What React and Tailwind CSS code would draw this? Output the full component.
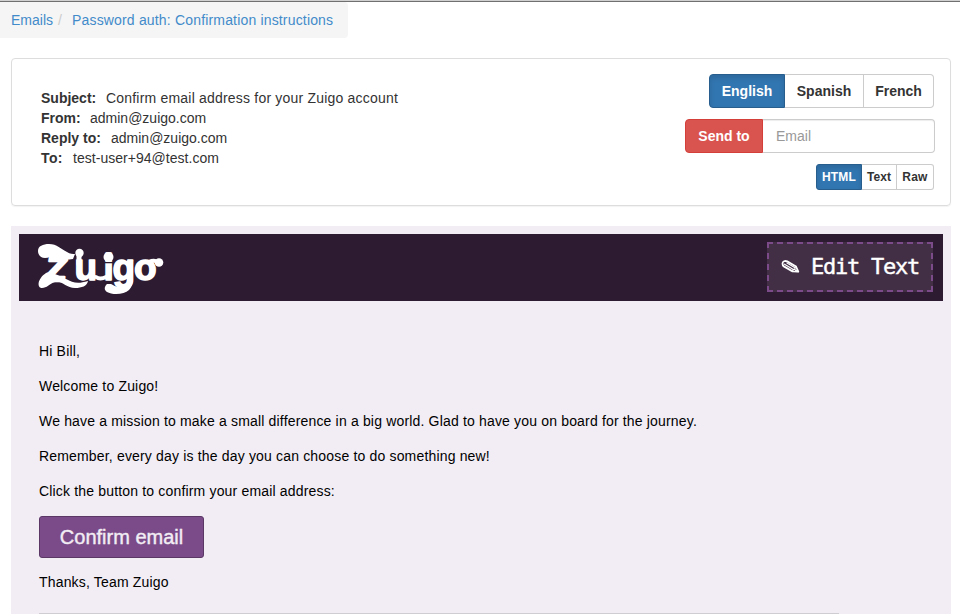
const details = [
  { label: 'Subject:', value: 'Confirm email address for your Zuigo account', lw: 'w-[65px]', ls: 'tracking-[0.2px]' },
  { label: 'From:', value: 'admin@zuigo.com', lw: 'w-[49px]', ls: 'tracking-[0px]' },
  { label: 'Reply to:', value: 'admin@zuigo.com', lw: 'w-[70px]', ls: 'tracking-[0px]' },
  { label: 'To:', value: 'test-user+94@test.com', lw: 'w-[32px] tracking-[0.4px]', ls: 'tracking-[0.03px]' },
];

const paragraphs = [
  'Hi Bill,',
  'Welcome to Zuigo!',
  'We have a mission to make a small difference in a big world. Glad to have you on board for the journey.',
  'Remember, every day is the day you can choose to do something new!',
  'Click the button to confirm your email address:',
];

function Logo() {
  return (
    <svg className="block h-[53px] w-[128px]" viewBox="0 0 128 53" role="img" aria-label="Zuigo">
      <g fill="#fff" stroke="#fff" strokeLinejoin="round" fontFamily="'Liberation Sans', Arial, sans-serif" fontWeight="700">
        <text y="38.500" x="8" fontSize="35" strokeWidth="2.500" fontStyle="italic">Z</text>
        <text y="37.500" x="37.5 66.5 75.5 97" fontSize="37" strokeWidth="1.500">uigo</text>
      </g>
      <g fill="#fff">
        <path d="M1 9C1 4 6 2 12 2c8 0 12 5 18 8 3 2 6 2 8 2l-2 5c-8 2-13-3-19-3-3 0-5 2-9 2-4 0-7-3-7-7Z" />
        <path d="M9 31C14 29 22 34 29 37c7 4 12 5 22 2-1 5-6 7-13 7-9 0-13-8-20-6-6 2-8 6-13 6C0 46 0 37 9 31Z" />
        <path d="M70 42c-3 3-3 6 0 8 5 3 17 3 22-2 3-3 4-7 4-11l-6 1c0 5-2 7-7 7-5 0-6-2-9-3Z" />
        <circle cx="42.500" cy="11" r="4.200" />
        <circle cx="71.500" cy="15" r="5" />
        <circle cx="122" cy="20.500" r="4.300" />
      </g>
      <path d="M71.500 20.600h-5M71.500 20.600h5" stroke="#2d1b32" strokeWidth="1.200" />
      <g fill="none" stroke="#fff" strokeLinecap="round">
        <path d="M42 12v10" strokeWidth="5" />
        <path d="M59 35Q63 38 69 35" strokeWidth="4" />
        <path d="M112 20Q117 17.500 121 20" strokeWidth="4" />
      </g>
    </svg>
  );
}

function Pencil() {
  return (
    <svg className="mr-[11px] h-[16px] w-[19px]" viewBox="0 0 19 16" fill="none" stroke="#fff" strokeLinejoin="round" strokeLinecap="round">
      <path d="M1.500 4.500C1.500 2.300 4 1.500 6.200 2.400L15 7.500 17.300 12.700 11.500 12.400 2.800 7.400C1.800 6.700 1.500 5.600 1.500 4.500Z" strokeWidth="1.800" />
      <path d="M3.500 5.200 11.500 10M6 4 14 8.800M11.500 12.400 12.300 10.300 14 10.300 14 8.500 15 7.500" strokeWidth="1.200" />
      <path d="M15 11 17.300 12.700 14.500 12.500Z" fill="#fff" />
    </svg>
  );
}

export default function App() {
  return (
    <div className="flex h-[614px] w-[960px] flex-col overflow-hidden bg-white font-['Liberation_Sans',Arial,sans-serif] text-[14px] leading-5 text-[#333]">
      <div className="h-[2px] shrink-0 border-t border-b border-t-[#d0d0d0] border-b-[#707070]" />
      <nav className="flex h-[36px] w-[348px] shrink-0 items-center rounded-r-[4px] bg-[#f5f5f5] pl-[11px] text-[#428bca]">
        <a className="w-[47px]">Emails</a>
        <span className="w-[14px] text-[#ccc]">/</span>
        <a className="tracking-[0.17px] whitespace-nowrap">Password auth: Confirmation instructions</a>
      </nav>

      <section className="mt-[20px] ml-[11px] flex h-[148px] w-[940px] shrink-0 justify-between rounded-[4px] border border-[#ddd] pl-[29px] shadow-[0_1px_1px_rgba(0,0,0,0.05)]">
        <dl className="pt-[29px]">
          {details.map((d) => (
            <div key={d.label} className="flex h-5 whitespace-nowrap">
              <dt className={`${d.lw} font-bold`}>{d.label}</dt>
              <dd className={d.ls}>{d.value}</dd>
            </div>
          ))}
        </dl>
        <div className="flex flex-col items-end pt-[15px] pr-[15px]">
          <div className="mr-px flex h-[34px] font-bold">
            <button className="w-[76px] rounded-l-[4px] border border-[#285e8e] bg-[#3276b1] text-white shadow-[inset_0_3px_5px_rgba(0,0,0,0.125)]">English</button>
            <button className="w-[79px] border-y border-r border-[#ccc]">Spanish</button>
            <button className="w-[70px] rounded-r-[4px] border-y border-r border-[#ccc]">French</button>
          </div>
          <div className="mt-[11px] flex h-[34px]">
            <button className="w-[78px] rounded-l-[4px] border border-[#d43f3a] bg-[#d9534f] font-bold text-white">Send to</button>
            <input placeholder="Email" className="w-[172px] rounded-r-[4px] border-y border-r border-[#ccc] pl-[13px] shadow-[inset_0_1px_1px_rgba(0,0,0,0.075)] placeholder:text-[#999]" />
          </div>
          <div className="mt-[11px] mr-px flex h-[26px] text-[12px] font-bold">
            <button className="w-[46px] rounded-l-[3px] border border-[#285e8e] bg-[#3276b1] tracking-[0.2px] text-white shadow-[inset_0_3px_5px_rgba(0,0,0,0.125)]">HTML</button>
            <button className="w-[35px] border-y border-r border-[#ccc]">Text</button>
            <button className="w-[37px] rounded-r-[3px] border-y border-r border-[#ccc] tracking-[0.2px]">Raw</button>
          </div>
        </div>
      </section>

      <main className="mt-[20px] ml-[11px] w-[940px] grow bg-[#f2edf4] px-[8px] pt-[8px] text-black">
        <header className="flex h-[67px] items-start justify-between bg-[#2d1b32] pt-[8px] pr-[10px] pl-[18px]">
          <Logo />
          <button className="flex h-[50px] w-[166px] items-center border-2 border-dashed border-[#7b4b89] bg-[#422f46] pl-[12px] font-['DejaVu_Sans_Mono',monospace] text-[22px] tracking-[-1.24px] whitespace-pre text-white [-webkit-text-stroke:0.4px_#fff]">
            <Pencil />
            Edit Text
          </button>
        </header>
        <article className="px-[20px] pt-[40px] tracking-[0.17px]">
          {paragraphs.map((p) => (
            <p key={p} className="mb-[15px] whitespace-nowrap">{p}</p>
          ))}
          <button className="block h-[42px] w-[165px] rounded-[3px] border border-[#5b3766] bg-[#7b4b89] text-[20px] tracking-[0px] text-[#f2edf4] [-webkit-text-stroke:0.4px_#f2edf4]">Confirm email</button>
          <p className="mt-[14px]">Thanks, Team Zuigo</p>
          <hr className="mt-[21px] w-[800px] border-[#d0cdd2]" />
        </article>
      </main>
    </div>
  );
}
